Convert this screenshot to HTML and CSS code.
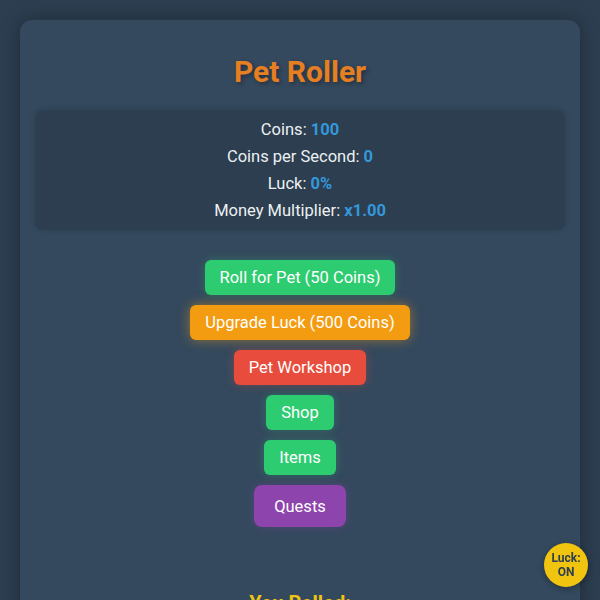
FILE: index.html
```html
<!DOCTYPE html>
<html lang="en">
<head>
    <meta charset="UTF-8">
    <meta name="viewport" content="width=device-width, initial-scale=1.0">
    <title>Pet Roller</title>
    <link rel="stylesheet" href="styles.css">
</head>
<body>
    <div class="container">
        <h1>Pet Roller</h1>
        <div class="stats">
            <p>Coins: <span class="value">100</span></p>
            <p>Coins per Second: <span class="value">0</span></p>
            <p>Luck: <span class="value">0%</span></p>
            <p>Money Multiplier: <span class="value">x1.00</span></p>
        </div>
        <div class="actions">
            <button class="btn btn-green">Roll for Pet (50 Coins)</button>
            <button class="btn btn-orange">Upgrade Luck (500 Coins)</button>
            <button class="btn btn-red">Pet Workshop</button>
            <button class="btn btn-green">Shop</button>
            <button class="btn btn-green">Items</button>
            <button class="btn btn-purple btn-big">Quests</button>
        </div>
        <h2 class="rolled">You Rolled:</h2>
    </div>
    <button class="luck-toggle">Luck:<br>ON</button>
</body>
</html>
```

FILE: styles.css
```css
body {
    font-family: Roboto, "Liberation Sans", Arial, sans-serif;
    margin: 0;
    padding: 20px;
    background-color: #2c3e50;
    color: #ecf0f1;
}
.container {
    background-color: #34495e;
    border-radius: 12px;
    padding: 15px;
    box-shadow: 0 0 20px rgba(0,0,0,0.3);
    text-align: center;
}
h1 {
    color: #e67e22;
    font-size: 30px;
    line-height: 36px;
    margin: 19px 0 20px;
    text-shadow: 2px 2px 4px rgba(0,0,0,0.35);
}
.stats {
    background-color: #2c3e50;
    border-radius: 8px;
    padding: 10px;
    display: flex;
    flex-direction: column;
    gap: 8px;
    box-shadow: 0 0 6px rgba(0,0,0,0.15);
}
.stats p {
    margin: 0;
    font-size: 16.5px;
    line-height: 19px;
}
.value {
    color: #3498db;
    font-weight: bold;
}
.actions {
    margin-top: 30px;
    display: flex;
    flex-direction: column;
    align-items: center;
    gap: 10px;
}
.btn {
    font-family: inherit;
    font-size: 16.5px;
    line-height: 19px;
    color: white;
    border: none;
    border-radius: 6px;
    padding: 8px 15px;
    cursor: pointer;
}
.btn-green {
    background-color: #2ecc71;
    box-shadow: 0 0 10px rgba(46,204,113,0.3);
}
.btn-orange {
    background-color: #f39c12;
    box-shadow: 0 0 12px rgba(243,156,18,0.5);
}
.btn-red {
    background-color: #e74c3c;
    box-shadow: 0 0 10px rgba(231,76,60,0.35);
}
.btn-purple {
    background-color: #8e44ad;
    box-shadow: 0 0 10px rgba(142,68,173,0.35);
}
.btn-big {
    padding: 12px 20px 11px;
    border-radius: 8px;
}
.rolled {
    color: #f1c40f;
    font-size: 20px;
    margin: 64px 0 10px;
}
.luck-toggle {
    position: fixed;
    right: 12px;
    bottom: 13px;
    width: 44px;
    height: 44px;
    border-radius: 50%;
    border: none;
    background-color: #f1c40f;
    color: #2c3e50;
    font-family: inherit;
    font-size: 12px;
    font-weight: bold;
    line-height: 14px;
    padding: 0;
    box-shadow: 0 2px 6px rgba(0,0,0,0.3);
}
```
